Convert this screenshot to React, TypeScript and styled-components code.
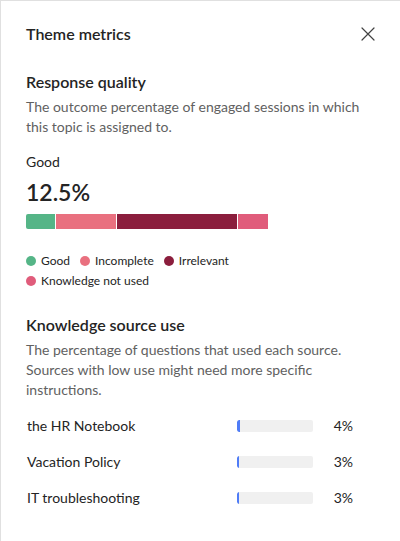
import React from "react";
import styled, { createGlobalStyle } from "styled-components";

const Global = createGlobalStyle`
  html, body { margin: 0; padding: 0; background: #ffffff; }
  body { font-family: "Segoe UI", "Lato", "Noto Sans", sans-serif; color: #242424; }
  * { box-sizing: border-box; }
`;

const Panel = styled.div`
  width: 400px;
  height: 541px;
  border-left: 1px solid #e0e0e0;
  border-top: 1px solid #e0e0e0;
  padding: 20px 24px 0 25px;
  background: #fff;
  overflow: hidden;
`;

const Header = styled.div`
  display: flex;
  align-items: center;
  justify-content: space-between;
  height: 26px;
`;

const Title = styled.h1`
  margin: 0;
  font-size: 16px;
  font-weight: 600;
  line-height: 22px;
  color: #242424;
`;

const CloseButton = styled.button`
  border: none;
  background: transparent;
  padding: 0;
  width: 20px;
  height: 20px;
  display: flex;
  align-items: center;
  justify-content: center;
  margin-right: -2px;
  color: #424242;
  cursor: pointer;
`;

const Section = styled.section<{ $top: number }>`
  margin-top: ${(p) => p.$top}px;
`;

const SectionTitle = styled.h2`
  margin: 0;
  font-size: 16px;
  font-weight: 600;
  line-height: 22px;
  color: #242424;
`;

const Description = styled.p`
  margin: 4px 0 0;
  font-size: 14px;
  line-height: 20px;
  color: #616161;
`;

const MetricLabel = styled.div`
  margin-top: 15px;
  font-size: 14px;
  line-height: 20px;
  color: #242424;
`;

const MetricValue = styled.div`
  margin-top: 4px;
  font-size: 23px;
  font-weight: 600;
  line-height: 32px;
  color: #242424;
`;

const StackedBar = styled.div`
  margin-top: 6px;
  display: flex;
  gap: 1px;
  width: 242px;
  height: 15px;
`;

const Segment = styled.div<{ $color: string; $first?: boolean }>`
  background: ${(p) => p.$color};
  height: 100%;
  border-radius: ${(p) => (p.$first ? "2px 0 0 2px" : "0")};
`;

const Legend = styled.div`
  margin-top: 22px;
  display: flex;
  flex-wrap: wrap;
  width: 260px;
  column-gap: 10px;
`;

const LegendItem = styled.div`
  display: flex;
  align-items: center;
  gap: 5px;
  font-size: 12px;
  line-height: 20px;
  color: #242424;
`;

const Dot = styled.span<{ $color: string }>`
  width: 10px;
  height: 10px;
  border-radius: 50%;
  background: ${(p) => p.$color};
  flex: none;
`;

const SourceList = styled.div`
  margin-top: 8px;
  display: flex;
  flex-direction: column;
`;

const SourceRow = styled.div`
  display: grid;
  grid-template-columns: 210px 76px 40px;
  align-items: center;
  height: 36px;
  padding-left: 1px;
`;

const SourceName = styled.span`
  font-size: 14px;
  line-height: 20px;
  color: #242424;
`;

const Track = styled.div`
  height: 12px;
  background: #f0f0f0;
  border-radius: 2px;
  overflow: hidden;
`;

const Fill = styled.div`
  height: 100%;
  background: #4f7cf7;
  border-radius: 2px 0 0 2px;
`;

const Percent = styled.span`
  font-size: 14px;
  line-height: 20px;
  color: #242424;
  text-align: right;
`;

const segments = [
  { color: "#55b587", w: 29 },
  { color: "#e9707f", w: 60 },
  { color: "#8b1e3d", w: 120 },
  { color: "#e05c7b", w: 30 },
];

const legend = [
  { label: "Good", color: "#55b587" },
  { label: "Incomplete", color: "#e9707f" },
  { label: "Irrelevant", color: "#8b1e3d" },
  { label: "Knowledge not used", color: "#e05c7b" },
];

const sources = [
  { name: "the HR Notebook", pct: 4 },
  { name: "Vacation Policy", pct: 3 },
  { name: "IT troubleshooting", pct: 3 },
];

export default function App() {
  return (
    <>
      <Global />
      <Panel>
        <Header>
          <Title>Theme metrics</Title>
          <CloseButton aria-label="Close">
            <svg width="14" height="14" viewBox="0 0 14 14">
              <path d="M1 1 L13 13 M13 1 L1 13" stroke="currentColor" strokeWidth="1.2" strokeLinecap="round" />
            </svg>
          </CloseButton>
        </Header>

        <Section $top={24}>
          <SectionTitle>Response quality</SectionTitle>
          <Description>
            The outcome percentage of engaged sessions in which this topic is assigned to.
          </Description>
          <MetricLabel>Good</MetricLabel>
          <MetricValue>12.5%</MetricValue>
          <StackedBar>
            {segments.map((s, i) => (
              <Segment key={i} $color={s.color} $first={i === 0} style={{ width: s.w }} />
            ))}
          </StackedBar>
          <Legend>
            {legend.map((l) => (
              <LegendItem key={l.label}>
                <Dot $color={l.color} />
                {l.label}
              </LegendItem>
            ))}
          </Legend>
        </Section>

        <Section $top={23}>
          <SectionTitle>Knowledge source use</SectionTitle>
          <Description>
            The percentage of questions that used each source. Sources with low use might need more specific instructions.
          </Description>
          <SourceList>
            {sources.map((s) => (
              <SourceRow key={s.name}>
                <SourceName>{s.name}</SourceName>
                <Track>
                  <Fill style={{ width: Math.max(2, Math.round(s.pct * 0.7)) }} />
                </Track>
                <Percent>{s.pct}%</Percent>
              </SourceRow>
            ))}
          </SourceList>
        </Section>
      </Panel>
    </>
  );
}
